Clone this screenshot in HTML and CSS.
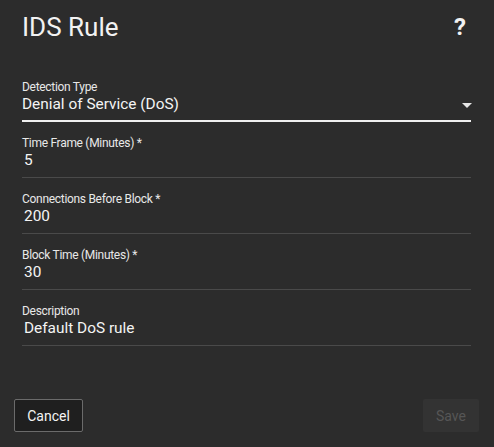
FILE: index.html
```html
<!DOCTYPE html>
<html>
<head>
<meta charset="utf-8">
<link rel="stylesheet" href="styles.css">
</head>
<body>
<div class="dialog">
  <div class="header">
    <h1 class="title">IDS Rule</h1>
    <span class="help">?</span>
  </div>
  <div class="form">
    <div class="field select">
      <div class="label">Detection Type</div>
      <div class="value-row">
        <span class="value">Denial of Service (DoS)</span>
        <svg class="caret" width="10" height="5" viewBox="0 0 10 5"><path d="M0 0 L10 0 L5 5 Z" fill="#e6e6e6"/></svg>
      </div>
    </div>
    <div class="field">
      <div class="label">Time Frame (Minutes) *</div>
      <div class="value input">5</div>
    </div>
    <div class="field">
      <div class="label">Connections Before Block *</div>
      <div class="value input">200</div>
    </div>
    <div class="field">
      <div class="label">Block Time (Minutes) *</div>
      <div class="value input">30</div>
    </div>
    <div class="field">
      <div class="label">Description</div>
      <div class="value input">Default DoS rule</div>
    </div>
  </div>
  <div class="actions">
    <button class="btn cancel">Cancel</button>
    <button class="btn save" disabled>Save</button>
  </div>
</div>
</body>
</html>
```
FILE: styles.css
```css
html, body {
  margin: 0;
  padding: 0;
  background: #2c2c2c;
  height: 100%;
}
body {
  font-family: Roboto, "Liberation Sans", sans-serif;
  color: #ececec;
}
.dialog {
  height: 447px;
  display: flex;
  flex-direction: column;
}
.header {
  display: flex;
  align-items: center;
  justify-content: space-between;
  padding: 11px 28px 0 22px;
  height: 32px;
}
.title {
  margin: 0;
  font-size: 26px;
  font-weight: 400;
  line-height: 32px;
  color: #f2f2f2;
}
.help {
  font-size: 24px;
  font-weight: 700;
  line-height: 32px;
  color: #f2f2f2;
}
.form {
  padding: 37px 23px 0 22px;
  display: flex;
  flex-direction: column;
}
.field {
  border-bottom: 1px solid #4a4a4a;
  padding-bottom: 7px;
  margin-bottom: 14px;
}
.field.select {
  border-bottom: 2px solid #f0f0f0;
  padding-bottom: 6px;
  margin-bottom: 14px;
}
.label {
  font-size: 12px;
  line-height: 14px;
  letter-spacing: -0.3px;
  color: #e8e8e8;
}
.value-row {
  display: flex;
  align-items: center;
  justify-content: space-between;
}
.value {
  font-size: 15.4px;
  line-height: 20px;
  color: #f4f4f4;
}
.value.input {
  padding-left: 2px;
}
.caret {
  margin-right: -1px;
  margin-top: 3px;
}
.actions {
  margin-top: auto;
  display: flex;
  justify-content: space-between;
  padding: 0 15px 15px 14px;
}
.btn {
  font-family: Roboto, "Liberation Sans", sans-serif;
  font-size: 14px;
  height: 33px;
  border-radius: 2px;
  padding: 0 12px;
}
.cancel {
  background: #1f1f1f;
  border: 1px solid #6b6b6b;
  color: #f4f4f4;
  width: 69px;
}
.save {
  background: #333333;
  border: none;
  color: #565656;
  width: 56px;
}
```
